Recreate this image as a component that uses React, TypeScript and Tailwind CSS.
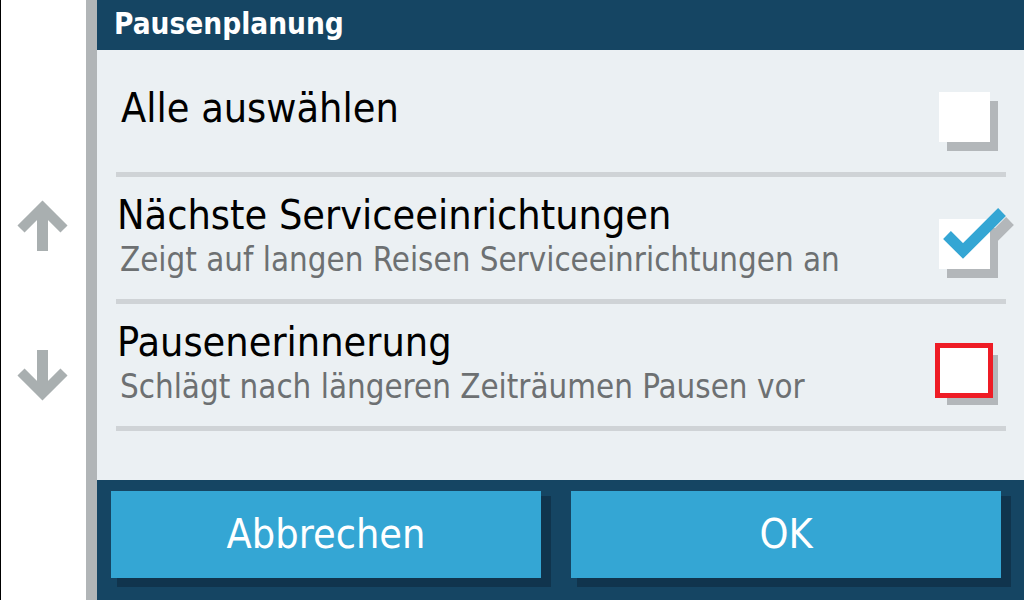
import React from "react";

const FONT = {
  fontFamily: '"DejaVu Sans Condensed", "DejaVu Sans", "Liberation Sans", sans-serif',
  fontStretch: "condensed",
};

function Checkbox({ checked, error }: { checked?: boolean; error?: boolean }) {
  return (
    <div className="relative w-[51px] h-[50px]">
      <div className="absolute left-[8px] top-[9px] w-[51px] h-[50px] bg-[#b3b7ba]" />
      {checked && (
        <svg
          className="absolute left-0 top-0 overflow-visible"
          width="51"
          height="50"
          viewBox="0 0 51 50"
        >
          <polyline
            points="16,25 32,41 71,2"
            fill="none"
            stroke="#b3b7ba"
            strokeWidth="11"
            strokeLinejoin="miter"
            strokeLinecap="butt"
          />
        </svg>
      )}
      {error ? (
        <div className="absolute left-[-4px] top-[-3px] w-[58px] h-[55px] border-[5px] border-[#ee1c25] bg-white" />
      ) : (
        <div className="absolute left-0 top-0 w-[51px] h-[50px] bg-white" />
      )}
      {checked && (
        <svg
          className="absolute left-0 top-0 overflow-visible"
          width="51"
          height="50"
          viewBox="0 0 51 50"
        >
          <polyline
            points="8,16 24,32 63,-7"
            fill="none"
            stroke="#34a6d4"
            strokeWidth="11"
            strokeLinejoin="miter"
            strokeLinecap="butt"
          />
        </svg>
      )}
    </div>
  );
}

function Row({
  title,
  subtitle,
  checked,
  error,
  indent,
}: {
  title: string;
  subtitle?: string;
  checked?: boolean;
  error?: boolean;
  indent?: boolean;
}) {
  return (
    <div className="flex flex-col">
      <div className="h-[122px] flex items-start pl-[19px] pr-[34px]">
        <div
          className={
            "flex-1 flex flex-col justify-center h-full " +
            (indent ? "pl-[5px] pb-[6px]" : "pl-[1px] pb-[2px]")
          }
        >
          <div className="text-[41px] leading-[46px] text-black">{title}</div>
          {subtitle && (
            <div className="pl-[3px] text-[32.8px] leading-[44px] text-[#6d7072]">
              {subtitle}
            </div>
          )}
        </div>
        <div className="mt-[42px]">
          <Checkbox checked={checked} error={error} />
        </div>
      </div>
      <div className="ml-[19px] mr-[18px] h-[5px] bg-[#cfd3d6]" />
    </div>
  );
}

export default function App() {
  return (
    <div className="w-[1024px] h-[600px] flex overflow-hidden bg-white" style={FONT}>
      <div className="w-[86px] h-full border-l border-black bg-white flex flex-col">
        <svg className="mt-[200px] ml-[15px]" width="54" height="51" viewBox="0 0 54 51">
          <line x1="26.5" y1="51" x2="26.5" y2="8" stroke="#a9afb0" strokeWidth="11" />
          <polyline
            points="5,29 26.5,7.5 48,29"
            fill="none"
            stroke="#a9afb0"
            strokeWidth="10"
            strokeLinejoin="miter"
          />
        </svg>
        <svg className="mt-[99px] ml-[15px]" width="54" height="51" viewBox="0 0 54 51">
          <line x1="26.5" y1="0" x2="26.5" y2="43" stroke="#a9afb0" strokeWidth="11" />
          <polyline
            points="5,22 26.5,43.5 48,22"
            fill="none"
            stroke="#a9afb0"
            strokeWidth="10"
            strokeLinejoin="miter"
          />
        </svg>
      </div>
      <div className="w-[11px] h-full bg-[#b1b5b7]" />
      <div className="flex-1 h-full flex flex-col">
        <div className="h-[50px] bg-[#154563] flex items-center pl-[17px]">
          <span className="text-white font-bold text-[29.5px] leading-none">Pausenplanung</span>
        </div>
        <div className="flex-1 bg-[#ebf0f3] flex flex-col">
          <Row title="Alle auswählen" indent />
          <Row
            title="Nächste Serviceeinrichtungen"
            subtitle="Zeigt auf langen Reisen Serviceeinrichtungen an"
            checked
          />
          <Row
            title="Pausenerinnerung"
            subtitle="Schlägt nach längeren Zeiträumen Pausen vor"
            error
          />
        </div>
        <div className="h-[120px] bg-[#154563] flex items-start pt-[11px] pl-[14px] gap-[30px]">
          <button className="w-[430px] h-[87px] bg-[#34a6d4] text-white text-[41px] shadow-[8px_7px_0_2px_#10344d]">
            Abbrechen
          </button>
          <button className="w-[430px] h-[87px] bg-[#34a6d4] text-white text-[41px] shadow-[8px_7px_0_2px_#10344d]">
            OK
          </button>
        </div>
      </div>
    </div>
  );
}
